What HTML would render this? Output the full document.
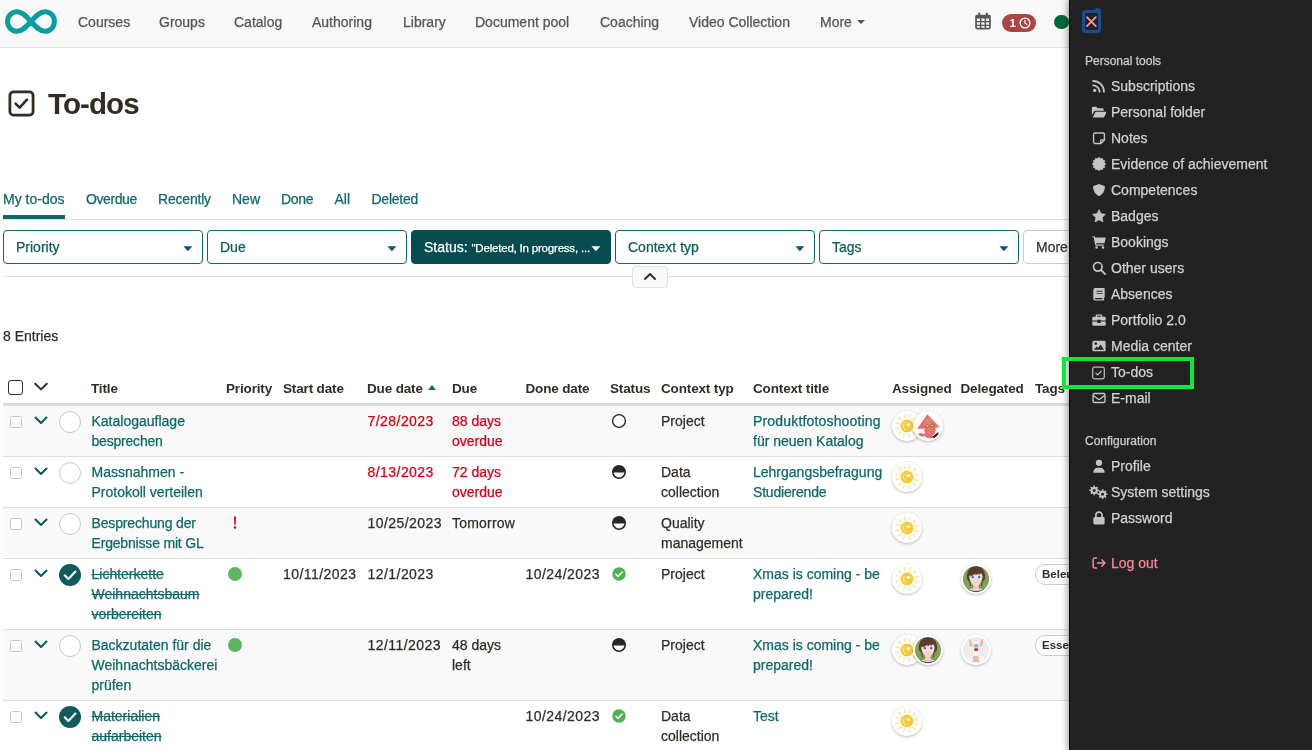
<!DOCTYPE html>
<html><head><meta charset="utf-8"><title>To-dos</title>
<style>
*{box-sizing:border-box}
html,body{margin:0;padding:0}
body{-webkit-text-stroke:0.25px;width:1312px;height:750px;overflow:hidden;position:relative;background:#fff;font-family:"Liberation Sans",sans-serif;font-size:14px;color:#342c24}
.abs{position:absolute}
#nav{position:absolute;left:0;top:0;width:1312px;height:48px;background:#f8f8f8;border-bottom:1px solid #e7e7e7}
#nav .it{position:absolute;top:13px;font-size:14px;line-height:18px;color:#555;white-space:nowrap}
.th,#h1,.tag,.b{-webkit-text-stroke:0}
#main,#nav,#panel{will-change:transform}
.tab{position:absolute;top:190px;font-size:14px;line-height:18px;color:#0e6869;white-space:nowrap}
.flt{position:absolute;top:230px;height:34px;width:200px;border:1px solid #0e6869;border-radius:4px;background:#fff;color:#0e5b5d;font-size:14px;line-height:32px;padding-left:12px;white-space:nowrap;overflow:hidden}
.flt .car{position:absolute;right:9.6px;top:15.2px;width:9px;height:5px;background:#0e5b5d;clip-path:polygon(0 0,100% 0,50% 100%)}
.th{position:absolute;top:380px;font-weight:bold;font-size:13.5px;letter-spacing:-0.15px;line-height:18px;color:#342c24;white-space:nowrap}
.row{position:absolute;left:3px;width:1309px;border-top:1px solid #ddd}
.row.odd{background:#f9f9f9}
.c{position:absolute;font-size:14px;line-height:20px;white-space:nowrap;color:#342c24}
.lk{color:#0e6869}
.red{color:#d6001c}
.st{text-decoration:line-through;text-decoration-thickness:1.2px}
.cb{position:absolute;left:7px;top:10px;width:12px;height:12px;border:1px solid #c4c4c4;border-radius:2.5px;background:#fff}
.chev{position:absolute;left:31px;top:10px;width:14px;height:9px}
.circ{position:absolute;left:56px;top:5px;width:22px;height:22px;border:1px solid #c8c8c8;border-radius:50%;background:#fff}
.circ.done{border:none;background:#0e5b5d}
.av{position:absolute;width:30px;height:30px;border-radius:50%;background:#fff;box-shadow:0 1px 3px rgba(0,0,0,.28);overflow:hidden}
.tag{position:absolute;height:20.5px;border:1px solid #ccc;border-radius:10px;background:#fff;font-size:11.5px;font-weight:bold;line-height:18px;padding:0 6px;color:#342c24;white-space:nowrap}
.dt{letter-spacing:.45px}
#panel{position:absolute;left:1069px;top:0;width:243px;height:750px;background:#222;box-shadow:inset 1px 0 0 #000,-2px 0 6px rgba(0,0,0,.35)}
#panel .h{position:absolute;left:16px;font-size:12px;line-height:16px;color:#cfcfcf;white-space:nowrap}
#panel .mi{position:absolute;left:42px;font-size:14px;line-height:20px;color:#d2d2d2;white-space:nowrap}
#panel svg.ic{position:absolute;left:22.5px;width:14px;height:14px;fill:#c4c4c4}
#hl{position:absolute;left:1062px;top:357px;width:132px;height:32px;border:4px solid #0bea3c}
</style></head>
<body>
<svg width="0" height="0" style="position:absolute"><defs>
<symbol id="sun" viewBox="0 0 30 30"><circle cx="15" cy="15" r="15" fill="#fff"/>
<g stroke="#fbdf86" stroke-width="1.2" stroke-linecap="round" transform="rotate(-13 15 15)"><path d="M15,3.2v3.4M15,23.6v3.2M3.4,15h3.2M23.4,15h3.2M9.1,4.9l1.6,2.9M19.3,22.2l1.6,2.9M20.9,4.9l-1.6,2.9M10.7,22.2l-1.6,2.9M4.9,9.1l2.9,1.6M22.2,19.3l2.9,1.6M4.9,20.9l2.9,-1.6M22.2,10.7l2.9,-1.6"/></g>
<circle cx="15" cy="15" r="6.5" fill="#f9c93a"/><path d="M13.2,11.2a4.3,4.3 0 0 0 1.7,8.1a5.2,5.2 0 0 1 -1.7,-8.1z" fill="#fde9a6"/><ellipse cx="16.3" cy="13.6" rx="1.9" ry="1.4" fill="#fff"/></symbol>
<symbol id="squid" viewBox="0 0 30 30"><circle cx="15" cy="15" r="15" fill="#fff"/>
<path d="M7,23.3c1.5,1.2 3.5,1 5,0.3c1.5,1.8 3.8,2.6 6.5,2.2" fill="none" stroke="#e66e68" stroke-width="2.6" stroke-linecap="round"/>
<path d="M6.3,22.2l0.9,1.8M8.5,21.8l0.3,1.5" stroke="#e66e68" stroke-width=".9" stroke-linecap="round"/>
<ellipse cx="17" cy="19" rx="5.7" ry="6.2" fill="#e66e68"/>
<path d="M14.4,3.7l11.6,12.2l-21.2,1.7z" fill="#e66e68" stroke="#e66e68" stroke-width=".8" stroke-linejoin="round"/>
<ellipse cx="14.8" cy="11.5" rx="3.6" ry="4.4" fill="#ee8683" opacity=".75"/>
<ellipse cx="17" cy="19.5" rx="3" ry="3.4" fill="#ea7a76" opacity=".7"/>
<ellipse cx="14.6" cy="14.9" rx="1.7" ry="1.15" fill="#f4c6bf" stroke="#7a5a2a" stroke-width=".75"/><ellipse cx="19.3" cy="14.5" rx="1.7" ry="1.15" fill="#f4c6bf" stroke="#7a5a2a" stroke-width=".75"/><path d="M16.3,14.7h1.3" stroke="#7a5a2a" stroke-width=".7"/>
<path d="M17.2,17.4l1.2,0.2M17.2,20.3c0.6,0.5 1.3,0.5 1.9,0" stroke="#b8423f" stroke-width=".5" fill="none"/>
<path d="M18.6,26.3l6.9,-5.4l-0.3,2.8l-3.8,3.3z" fill="#3c1420"/></symbol>
<symbol id="girl" viewBox="0 0 30 30"><circle cx="15" cy="15" r="15" fill="#fff"/><clipPath id="gc"><circle cx="15" cy="15" r="13"/></clipPath>
<g clip-path="url(#gc)"><rect width="30" height="30" fill="#7ea252"/>
<path d="M5.9,14C5.5,6 9.5,2.2 15,2.2C20.5,2.2 24.5,6 24.1,14C23.8,16 22.5,17 21.6,17.5L21,22.3L20.1,22.3L20.4,17L9.6,17L9.9,22.3L9,22.3L8.4,17.5C7.5,17 6.2,16 5.9,14z" fill="#5c3b2c"/>
<path d="M12.3,20h5.3v4.6c2.5,0.3 4.6,1 5.6,2v4h-16.4v-4c1,-1 3.1,-1.7 5.5,-2z" fill="#f1cfcc"/>
<path d="M8.2,12C8.2,9 11,7.5 15,7.5C19,7.5 21.6,9 21.6,12C21.6,17 18.5,21.8 15,21.8C11.5,21.8 8.2,17 8.2,12z" fill="#f4d9d6"/>
<path d="M7,13.5C6.5,7 10,4 15,4C20,4 23.5,7 23,13.5C22,12 21,10.5 20.3,9C19.5,10 18.5,10.6 17.3,11C17.5,10.3 17.6,9.8 17.6,9.3C16.5,10.2 15.5,10.8 14.2,11.2C14.5,10.5 14.6,10 14.6,9.5C13,11 11,12 9.2,12.4C9.6,11.8 9.9,11.3 10,10.7C8.8,11.4 7.8,12.3 7,13.5z" fill="#5c3b2c"/>
<ellipse cx="11.8" cy="13.2" rx="1.25" ry="1.1" fill="#3f66b0"/><ellipse cx="18.2" cy="13.2" rx="1.25" ry="1.1" fill="#3f66b0"/>
<path d="M13.8,18.6h2.4" stroke="#d9b0a8" stroke-width=".6"/>
<path d="M6,25.6c2.8,1.5 6,2.1 9,2.1s6.2,-0.6 9,-2.1" fill="none" stroke="#5a2d91" stroke-width="1.2"/></g></symbol>
<symbol id="mouse" viewBox="0 0 30 30"><circle cx="15" cy="15" r="15" fill="#fff"/><circle cx="15" cy="15" r="13" fill="#ececec"/>
<path d="M8.2,3.8c1.8,0.2 3.2,3.4 3.6,7.2c-0.6,0.9 -1.5,1.3 -2.4,1.1c-1.5,-2.4 -2.3,-6.3 -1.2,-8.3z" fill="#f0b8a4" stroke="#fff" stroke-width=".35"/>
<path d="M22,3.5c-1.8,0.2 -3.2,3.4 -3.6,7.2c0.6,0.9 1.5,1.3 2.4,1.1c1.5,-2.4 2.3,-6.3 1.2,-8.3z" fill="#f0b8a4" stroke="#fff" stroke-width=".35"/>
<path d="M12.6,9c0,-2.6 1,-4.2 2.4,-4.2s2.4,1.6 2.4,4.2l0.8,3.8c0.3,0.9 0.8,1.6 0,3.7c-0.3,1.2 -1.4,2 -3.2,2s-2.9,-0.8 -3.2,-2c-0.8,-2.1 -0.3,-2.8 0,-3.7z" fill="#fff"/>
<path d="M12.3,9.2c0.9,-0.7 1.8,-0.9 2.7,-0.5c0.9,-0.4 1.8,-0.2 2.7,0.5l0.3,2.5c-0.6,0.9 -1.6,1.2 -3,1.2s-2.4,-0.3 -3,-1.2z" fill="#a8d8d0"/>
<path d="M14.3,5.8h1.6M14.5,10.2v1.2M15.6,10.2v1.2" stroke="#444" stroke-width=".5"/>
<ellipse cx="15.1" cy="14.5" rx="2.3" ry="1.6" fill="#e3262b"/>
<path d="M13.8,18.3h2.6l0.5,3h-3.6z" fill="#fff"/>
<ellipse cx="14.8" cy="23.3" rx="7.6" ry="1.9" fill="none" stroke="#fff" stroke-width="1.2"/>
<path d="M12.3,21.2c1.6,-0.6 3.6,-0.6 5.2,0l0.4,4.8c-1.9,0.7 -4.1,0.7 -6,0z" fill="#e8bba8"/><path d="M12,26.2h6" stroke="#c89a88" stroke-width=".6"/></symbol>
<symbol id="chv" viewBox="0 0 14 9"><path d="M1.5,1.5l5.5,5.5l5.5,-5.5" fill="none" stroke="#0e5b5d" stroke-width="2.1" stroke-linecap="round" stroke-linejoin="round"/></symbol>
<symbol id="s-open" viewBox="0 0 16 16"><circle cx="8" cy="8" r="6.4" fill="none" stroke="#2b2623" stroke-width="1.35"/></symbol>
<symbol id="s-half" viewBox="0 0 16 16"><circle cx="8" cy="8" r="6.2" fill="#fff" stroke="#2b2623" stroke-width="1.6"/><path d="M1.4,8.4a6.6,6.6 0 0 1 13.2,0z" fill="#2b2623"/></symbol>
<symbol id="s-done" viewBox="0 0 16 16"><circle cx="8" cy="8" r="6.7" fill="#4db04f"/><path d="M4.9,8.2l2.2,2.2l4,-4.3" fill="none" stroke="#fff" stroke-width="1.6" stroke-linecap="round" stroke-linejoin="round"/></symbol>
<symbol id="tick" viewBox="0 0 22 22"><circle cx="11" cy="11" r="11" fill="#0e5b5d"/><path d="M5.7,11.3l3.7,3.7l7,-7.5" fill="none" stroke="#fff" stroke-width="2.1" stroke-linecap="round" stroke-linejoin="round"/></symbol>
</defs></svg>
<!--NAV-->
<div id="nav">
<svg class="abs" style="left:0;top:0" width="64" height="48" viewBox="0 0 64 48"><path d="M31,21.5 C26.5,16.5 22.5,11.7 17,11.7 C11.6,11.7 7.6,16 7.6,21.5 C7.6,27 11.6,31.3 17,31.3 C22.5,31.3 26.5,26.5 31,21.5 C35.5,16.5 39.5,11.7 45,11.7 C50.4,11.7 54.4,16 54.4,21.5 C54.4,27 50.4,31.3 45,31.3 C39.5,31.3 35.5,26.5 31,21.5 Z" fill="none" stroke="#0a9da0" stroke-width="5" stroke-linejoin="round"/></svg>
<span class="it" id="n1" style="left:78px">Courses</span>
<span class="it" id="n2" style="left:159px">Groups</span>
<span class="it" id="n3" style="left:234px">Catalog</span>
<span class="it" id="n4" style="left:312px">Authoring</span>
<span class="it" id="n5" style="left:403px">Library</span>
<span class="it" id="n6" style="left:475px">Document pool</span>
<span class="it" id="n7" style="left:600px">Coaching</span>
<span class="it" id="n8" style="left:689px">Video Collection</span>
<span class="it" id="n9" style="left:820px">More</span>
<div class="abs" style="left:857px;top:20px;width:0;height:0;border-left:4.5px solid transparent;border-right:4.5px solid transparent;border-top:4.5px solid #555"></div>
<svg class="abs" style="left:975px;top:12px" width="16" height="18" viewBox="0 0 16 18"><path fill="#555" fill-rule="evenodd" d="M3.2,0.8h2v2h5.6v-2h2v2h1.2a1.8,1.8 0 0 1 1.8,1.8v11a1.8,1.8 0 0 1 -1.8,1.8h-12a1.8,1.8 0 0 1 -1.8,-1.8v-11a1.8,1.8 0 0 1 1.8,-1.8h1.2z M1.9,6.6v2.4h3v-2.4z M6.4,6.6v2.4h3.2v-2.4z M11.1,6.6v2.4h3v-2.4z M1.9,10.3v2.4h3v-2.4z M6.4,10.3v2.4h3.2v-2.4z M11.1,10.3v2.4h3v-2.4z M1.9,14v1.2a0.5,0.5 0 0 0 0.5,0.5h2.5v-1.7z M6.4,14v1.7h3.2v-1.7z M11.1,14v1.7h2.5a0.5,0.5 0 0 0 0.5,-0.5v-1.2z"/></svg>
<div class="abs" style="left:1002px;top:14px;width:34px;height:18px;border-radius:9px;background:#ab4444"></div>
<span class="abs b" style="left:1009.6px;top:15px;font-size:11.5px;line-height:16px;font-weight:bold;color:#fff">1</span>
<svg class="abs" style="left:1019px;top:17px" width="12" height="12" viewBox="0 0 12 12"><circle cx="6" cy="6" r="4.9" fill="none" stroke="#fff" stroke-width="1.3"/><path d="M6,3.2V6.2L8,7.4" fill="none" stroke="#fff" stroke-width="1.2" stroke-linecap="round"/></svg>
<div class="abs" style="left:1054px;top:14.5px;width:14.5px;height:14.5px;border-radius:50%;background:#00673a"></div>
</div>
<!--MAIN-->
<div id="main">
<svg class="abs" style="left:8px;top:90px" width="27" height="27" viewBox="0 0 27 27"><rect x="1.9" y="1.9" width="23.2" height="23.2" rx="3.6" fill="none" stroke="#342c24" stroke-width="2.8"/><path d="M7.6,13.6l4,4l7.4,-7.9" fill="none" stroke="#342c24" stroke-width="2.7" stroke-linecap="round" stroke-linejoin="round"/></svg>
<span id="h1" class="abs" style="left:48px;top:87px;font-size:29.5px;line-height:34px;font-weight:bold;color:#342c24;letter-spacing:-0.9px;white-space:nowrap">To-dos</span>

<span class="tab" id="t1" style="left:3px">My to-dos</span>
<span class="tab" id="t2" style="left:86px;letter-spacing:-0.4px">Overdue</span>
<span class="tab" id="t3" style="left:158px;letter-spacing:-0.2px">Recently</span>
<span class="tab" id="t4" style="left:232px">New</span>
<span class="tab" id="t5" style="left:281px;letter-spacing:-0.3px">Done</span>
<span class="tab" id="t6" style="left:334.5px">All</span>
<span class="tab" id="t7" style="left:371.5px;letter-spacing:-0.25px">Deleted</span>
<div class="abs" style="left:3px;top:219px;width:1309px;height:1px;background:#dedede"></div>
<div class="abs" style="left:3px;top:215px;width:62px;height:4px;background:#0e6869"></div>

<div class="flt" style="left:3px"><span id="f1">Priority</span><i class="car"></i></div>
<div class="flt" style="left:207px"><span id="f2">Due</span><i class="car"></i></div>
<div class="flt" style="left:411px;background:#054b50;border-color:#054b50;color:#fff"><span id="f3">Status:</span> <span id="f3b" style="font-size:11.5px;letter-spacing:-0.2px">"Deleted, In progress, ...</span><i class="car" style="background:#fff"></i></div>
<div class="flt" style="left:615px"><span id="f4">Context typ</span><i class="car"></i></div>
<div class="flt" style="left:819px"><span id="f5">Tags</span><i class="car"></i></div>
<div class="flt" style="left:1023px;border-color:#ccc;color:#333"><span id="f6">More</span></div>

<div class="abs" style="left:3px;top:276px;width:1309px;height:1px;background:#e2e2e2"></div>
<div class="abs" style="left:632px;top:266px;width:36px;height:22px;border:1px solid #e2e2e2;border-radius:4px;background:#f9f9f9"></div>
<svg class="abs" style="left:643px;top:272px" width="14" height="9" viewBox="0 0 14 9"><path d="M2,7l5,-5l5,5" fill="none" stroke="#342c24" stroke-width="1.9" stroke-linecap="round" stroke-linejoin="round"/></svg>

<span id="ent" class="abs" style="left:3px;top:327px;font-size:14px;line-height:18px;color:#342c24">8 Entries</span>

<div class="abs" style="left:8px;top:380px;width:15px;height:15px;border:1.6px solid #342c24;border-radius:3px;background:#fff"></div>
<svg class="abs" style="left:32.5px;top:382px" width="16" height="10" viewBox="0 0 16 10"><path d="M2.2,1.8l5.8,5.6l5.8,-5.6" fill="none" stroke="#342c24" stroke-width="2" stroke-linecap="round" stroke-linejoin="round"/></svg>
<span class="th" id="th1" style="left:91px">Title</span>
<span class="th" id="th2" style="left:226px">Priority</span>
<span class="th" id="th3" style="left:283px">Start date</span>
<span class="th" id="th4" style="left:367px">Due date</span>
<div class="abs" style="left:428px;top:385px;width:0;height:0;border-left:4.5px solid transparent;border-right:4.5px solid transparent;border-bottom:5px solid #0e6869"></div>
<span class="th" id="th5" style="left:452px">Due</span>
<span class="th" id="th6" style="left:525.5px">Done date</span>
<span class="th" id="th7" style="left:610px">Status</span>
<span class="th" id="th8" style="left:661px">Context typ</span>
<span class="th" id="th9" style="left:753px">Context title</span>
<span class="th" id="th10" style="left:892px">Assigned</span>
<span class="th" id="th11" style="left:960.5px">Delegated</span>
<span class="th" id="th12" style="left:1035px">Tags</span>
<div class="abs" style="left:3px;top:403px;width:1309px;height:3px;background:#dcdcdc"></div>
<div class="row odd" style="top:405px;height:51px;border-top-color:#dcdcdc">
<i class="cb"></i><svg class="chev"><use href="#chv"/></svg><i class="circ"></i>
<span class="c lk" id="r1a" style="left:88.5px;top:5px">Katalogauflage<br><span style="letter-spacing:-0.2px">besprechen</span></span>
<span class="c red dt" id="r1b" style="left:364.5px;top:5px">7/28/2023</span>
<span class="c red" id="r1c" style="left:449px;top:5px">88 days<br>overdue</span>
<svg class="abs" style="left:608px;top:7px" width="16" height="16"><use href="#s-open"/></svg>
<span class="c" id="r1d" style="left:658px;top:5px">Project</span>
<span class="c lk" id="r1e" style="left:750px;top:5px"><span style="letter-spacing:0.17px">Produktfotoshooting</span><br>für neuen Katalog</span>
<svg class="av" style="left:889px;top:5px"><use href="#sun"/></svg>
<svg class="av" style="left:910px;top:5px"><use href="#squid"/></svg>
</div>

<div class="row" style="top:456px;height:51px">
<i class="cb"></i><svg class="chev"><use href="#chv"/></svg><i class="circ"></i>
<span class="c lk" id="r2a" style="left:88.5px;top:5px">Massnahmen -<br>Protokoll verteilen</span>
<span class="c red dt" id="r2b" style="left:364.5px;top:5px">8/13/2023</span>
<span class="c red" id="r2c" style="left:449px;top:5px">72 days<br>overdue</span>
<svg class="abs" style="left:608px;top:7px" width="16" height="16"><use href="#s-half"/></svg>
<span class="c" id="r2d" style="left:658px;top:5px">Data<br>collection</span>
<span class="c lk" id="r2e" style="left:750px;top:5px">Lehrgangsbefragung<br><span style="letter-spacing:-0.2px">Studierende</span></span>
<svg class="av" style="left:889px;top:5px"><use href="#sun"/></svg>
</div>

<div class="row odd" style="top:507px;height:51px">
<i class="cb"></i><svg class="chev"><use href="#chv"/></svg><i class="circ"></i>
<span class="c lk" id="r3a" style="left:88.5px;top:5px"><span style="letter-spacing:-0.15px">Besprechung der</span><br><span style="letter-spacing:-0.18px">Ergebnisse mit GL</span></span>
<svg class="abs" style="left:230.4px;top:8.2px" width="4" height="13" viewBox="0 0 4 13"><path d="M1,0.4h2l-0.3,8.3h-1.4z" fill="#d6001c"/><circle cx="2" cy="11.4" r="1.25" fill="#d6001c"/></svg>
<span class="c dt" id="r3b" style="left:364.5px;top:5px">10/25/2023</span>
<span class="c" id="r3c" style="left:449px;top:5px"><span style="letter-spacing:0.2px">Tomorrow</span></span>
<svg class="abs" style="left:608px;top:7px" width="16" height="16"><use href="#s-half"/></svg>
<span class="c" id="r3d" style="left:658px;top:5px">Quality<br>management</span>
<svg class="av" style="left:889px;top:5px"><use href="#sun"/></svg>
</div>

<div class="row" style="top:558px;height:71px">
<i class="cb"></i><svg class="chev"><use href="#chv"/></svg><svg class="abs" style="left:56px;top:5px" width="22" height="22"><use href="#tick"/></svg>
<span class="c lk st" id="r4a" style="left:88.5px;top:5px">Lichterkette<br>Weihnachtsbaum<br>vorbereiten</span>
<i class="abs" style="left:225.3px;top:7.8px;width:14px;height:14px;border-radius:50%;background:#5cb560"></i>
<span class="c dt" id="r4s" style="left:280px;top:5px">10/11/2023</span>
<span class="c dt" id="r4b" style="left:364.5px;top:5px">12/1/2023</span>
<span class="c dt" id="r4f" style="left:522.5px;top:5px">10/24/2023</span>
<svg class="abs" style="left:608px;top:7px" width="16" height="16"><use href="#s-done"/></svg>
<span class="c" id="r4d" style="left:658px;top:5px">Project</span>
<span class="c lk" id="r4e" style="left:750px;top:5px">Xmas is coming - be<br>prepared!</span>
<svg class="av" style="left:889px;top:5px"><use href="#sun"/></svg>
<svg class="av" style="left:958px;top:5px"><use href="#girl"/></svg>
<span class="tag" style="left:1032px;top:5px">Beleuchtung</span>
</div>

<div class="row odd" style="top:629px;height:71px">
<i class="cb"></i><svg class="chev"><use href="#chv"/></svg><i class="circ"></i>
<span class="c lk" id="r5a" style="left:88.5px;top:5px">Backzutaten für die<br>Weihnachtsbäckerei<br>prüfen</span>
<i class="abs" style="left:225.3px;top:7.8px;width:14px;height:14px;border-radius:50%;background:#5cb560"></i>
<span class="c dt" id="r5b" style="left:364.5px;top:5px">12/11/2023</span>
<span class="c" id="r5c" style="left:449px;top:5px">48 days<br>left</span>
<svg class="abs" style="left:608px;top:7px" width="16" height="16"><use href="#s-half"/></svg>
<span class="c" id="r5d" style="left:658px;top:5px">Project</span>
<span class="c lk" id="r5e" style="left:750px;top:5px">Xmas is coming - be<br>prepared!</span>
<svg class="av" style="left:889px;top:5px"><use href="#sun"/></svg>
<svg class="av" style="left:910px;top:5px"><use href="#girl"/></svg>
<svg class="av" style="left:958px;top:5px"><use href="#mouse"/></svg>
<span class="tag" style="left:1032px;top:5px">Essen</span>
</div>

<div class="row" style="top:700px;height:51px">
<i class="cb"></i><svg class="chev"><use href="#chv"/></svg><svg class="abs" style="left:56px;top:5px" width="22" height="22"><use href="#tick"/></svg>
<span class="c lk st" id="r6a" style="left:88.5px;top:5px">Materialien<br>aufarbeiten</span>
<span class="c dt" id="r6f" style="left:522.5px;top:5px">10/24/2023</span>
<svg class="abs" style="left:608px;top:7px" width="16" height="16"><use href="#s-done"/></svg>
<span class="c" id="r6d" style="left:658px;top:5px">Data<br>collection</span>
<span class="c lk" id="r6e" style="left:750px;top:5px">Test</span>
<svg class="av" style="left:889px;top:5px"><use href="#sun"/></svg>
</div>
</div>
<!--PANEL-->
<div id="panel">
<div class="abs" style="left:24.8px;top:7.6px;width:7.4px;height:7.4px;background:#134f93;border-radius:50%"></div>
<div class="abs" style="left:13px;top:10px;width:19px;height:23px;border:3px solid #134f93;border-radius:4px;background:#222"></div>
<div class="abs" style="left:27.7px;top:10.5px;width:1.7px;height:1.7px;background:#222;border-radius:50%"></div>
<svg class="abs" style="left:16px;top:15px" width="13" height="13" viewBox="0 0 13 13"><path d="M1.9,2.1L10.8,11.1M10.8,2.1L1.9,11.1" stroke="#f894a8" stroke-width="1.8" stroke-linecap="round" fill="none"/></svg>
<span class="h" id="ph1" style="top:53px">Personal tools</span>
<span class="h" id="ph2" style="top:433px">Configuration</span>

<svg class="ic" style="top:79px" viewBox="0 0 16 16"><circle cx="3.1" cy="13" r="1.9"/><path d="M1.3,7.3a7.4,7.4 0 0 1 7.4,7.4M1.3,2.3a12.4,12.4 0 0 1 12.4,12.4" fill="none" stroke="#c4c4c4" stroke-width="2.1" stroke-linecap="round"/></svg>
<span class="mi" id="p1" style="top:76px">Subscriptions</span>

<svg class="ic" style="top:105px;left:21.5px;width:15.75px" viewBox="0 0 18 16"><path d="M1,3.6a1.6,1.6 0 0 1 1.6,-1.6h3.3l1.8,1.8h5.2a1.6,1.6 0 0 1 1.6,1.6v1.1h-9.6a1.8,1.8 0 0 0 -1.6,1l-2.3,4.6z"/><path d="M4.7,8.6a1.3,1.3 0 0 1 1.2,-0.8h10.7a0.9,0.9 0 0 1 0.8,1.3l-2.2,4.4a1.3,1.3 0 0 1 -1.2,0.7h-12z"/></svg>
<span class="mi" id="p2" style="top:102px">Personal folder</span>

<svg class="ic" style="top:131px" viewBox="0 0 16 16"><path d="M3.4,2.2h9.2a1.6,1.6 0 0 1 1.6,1.6v6.4l-4,4h-6.8a1.6,1.6 0 0 1 -1.6,-1.6v-8.8a1.6,1.6 0 0 1 1.6,-1.6z M10,14v-3a0.9,0.9 0 0 1 0.9,-0.9h3" fill="none" stroke="#c4c4c4" stroke-width="1.6" stroke-linejoin="round"/></svg>
<span class="mi" id="p3" style="top:128px">Notes</span>

<svg class="ic" style="top:157px" viewBox="0 0 16 16"><path d="M8.0,0.1L9.6,1.9L11.9,1.2L12.5,3.5L14.8,4.0L14.1,6.4L15.9,8.0L14.1,9.6L14.8,11.9L12.5,12.5L11.9,14.8L9.6,14.1L8.0,15.9L6.4,14.1L4.1,14.8L3.5,12.5L1.2,12.0L1.9,9.6L0.1,8.0L1.9,6.4L1.2,4.0L3.5,3.5L4.0,1.2L6.4,1.9z" stroke="#c4c4c4" stroke-width="0.5" stroke-linejoin="round"/></svg>
<span class="mi" id="p4" style="top:154px">Evidence of achievement</span>

<svg class="ic" style="top:183px" viewBox="0 0 16 16"><path d="M8,1.1l6.1,2.3c0.4,0.2 0.6,0.5 0.6,0.9c0,5.2 -3.1,9.2 -6.7,10.7c-3.6,-1.5 -6.7,-5.5 -6.7,-10.7c0,-0.4 0.2,-0.7 0.6,-0.9z"/></svg>
<span class="mi" id="p5" style="top:180px">Competences</span>

<svg class="ic" style="top:209px" viewBox="0 0 16 16"><path d="M8,0.7l2.2,4.7l5.1,0.7l-3.7,3.6l0.9,5.1l-4.5,-2.5l-4.5,2.5l0.9,-5.1l-3.7,-3.6l5.1,-0.7z" stroke="#c4c4c4" stroke-width="0.8" stroke-linejoin="round"/></svg>
<span class="mi" id="p6" style="top:206px">Badges</span>

<svg class="ic" style="top:235px" viewBox="0 0 16 16"><path d="M0.4,1.3h2.3a0.7,0.7 0 0 1 0.7,0.6l0.2,1h11.4a0.7,0.7 0 0 1 0.7,0.9l-1.3,5a0.9,0.9 0 0 1 -0.9,0.7h-8.8l0.3,1.4h8.5v1.4h-9.1a0.7,0.7 0 0 1 -0.7,-0.6l-1.8,-9h-1.5z"/><circle cx="5.2" cy="14.2" r="1.4"/><circle cx="12.6" cy="14.2" r="1.4"/></svg>
<span class="mi" id="p7" style="top:232px">Bookings</span>

<svg class="ic" style="top:261px" viewBox="0 0 16 16"><circle cx="6.6" cy="6.6" r="4.9" fill="none" stroke="#c4c4c4" stroke-width="1.9"/><path d="M10.3,10.3l4.7,4.7" stroke="#c4c4c4" stroke-width="2.1" stroke-linecap="round"/></svg>
<span class="mi" id="p8" style="top:258px">Other users</span>

<svg class="ic" style="top:287px" viewBox="0 0 16 16"><path fill-rule="evenodd" d="M4,1h9.5a1,1 0 0 1 1,1v9.5a1,1 0 0 1 -1,1v1.5h0.5v1.3h-10.2a2.3,2.3 0 0 1 -2.3,-2.3v-9.7a2.5,2.5 0 0 1 2.5,-2.3z M4,12.5a0.75,0.75 0 0 0 0,1.5h8v-1.5z M5.2,4.3v1.1h6.8v-1.1z M5.2,7v1.1h6.8v-1.1z"/></svg>
<span class="mi" id="p9" style="top:284px">Absences</span>

<svg class="ic" style="top:313px" viewBox="0 0 16 16"><path fill-rule="evenodd" d="M5.6,1.6h4.8a1.4,1.4 0 0 1 1.4,1.4v1.3h2.4a1.5,1.5 0 0 1 1.5,1.5v2.8h-5.7v-0.8h-4v0.8h-5.7v-2.8a1.5,1.5 0 0 1 1.5,-1.5h2.4v-1.3a1.4,1.4 0 0 1 1.4,-1.4z M5.8,3.1v1.2h4.4v-1.2z"/><path d="M0.3,9.8h5.7v1a0.6,0.6 0 0 0 0.6,0.6h2.8a0.6,0.6 0 0 0 0.6,-0.6v-1h5.7v3.3a1.5,1.5 0 0 1 -1.5,1.5h-12.4a1.5,1.5 0 0 1 -1.5,-1.5z"/></svg>
<span class="mi" id="p10" style="top:310px">Portfolio 2.0</span>

<svg class="ic" style="top:339px" viewBox="0 0 16 16"><path fill-rule="evenodd" d="M2.2,2h11.6a1.8,1.8 0 0 1 1.8,1.8v8.4a1.8,1.8 0 0 1 -1.8,1.8h-11.6a1.8,1.8 0 0 1 -1.8,-1.8v-8.4a1.8,1.8 0 0 1 1.8,-1.8z M4.3,3.8a1.5,1.5 0 1 0 0.01,0z M2.2,12.3h11.6l-4,-6.1l-2.9,4.1l-1.5,-1.8z"/></svg>
<span class="mi" id="p11" style="top:336px">Media center</span>

<svg class="ic" style="top:365.5px;left:23px;width:13px;height:14px" viewBox="0 0 13 14"><rect x="0.7" y="1.2" width="11.6" height="11.6" rx="1.8" fill="none" stroke="#bdbdbd" stroke-width="1.25"/><path d="M3.9,7.1l1.8,1.8l3.4,-3.6" fill="none" stroke="#bdbdbd" stroke-width="1.25" stroke-linecap="round" stroke-linejoin="round"/></svg>
<span class="mi" id="p12" style="top:362px">To-dos</span>

<svg class="ic" style="top:391px" viewBox="0 0 16 16"><rect x="1.2" y="2.8" width="13.6" height="10.4" rx="1.7" fill="none" stroke="#c4c4c4" stroke-width="1.6"/><path d="M1.6,5.2l5.3,4a1.8,1.8 0 0 0 2.2,0l5.3,-4" fill="none" stroke="#c4c4c4" stroke-width="1.6"/></svg>
<span class="mi" id="p13" style="top:388px">E-mail</span>

<svg class="ic" style="top:459px" viewBox="0 0 16 16"><circle cx="8" cy="4.4" r="3.6"/><path d="M1.5,15.2a4.9,4.9 0 0 1 4.9,-5.1h3.2a4.9,4.9 0 0 1 4.9,5.1a0.6,0.6 0 0 1 -0.6,0.5h-11.8a0.6,0.6 0 0 1 -0.6,-0.5z"/></svg>
<span class="mi" id="p14" style="top:456px">Profile</span>

<svg class="ic" style="top:484px;left:19px;width:20px;height:16px" viewBox="0 0 20 16"><path fill-rule="evenodd" d="M11.06,5.75L11.06,7.05L9.70,7.24L9.27,8.28L10.10,9.37L9.17,10.30L8.08,9.47L7.04,9.90L6.85,11.26L5.55,11.26L5.36,9.90L4.32,9.47L3.23,10.30L2.30,9.37L3.13,8.28L2.70,7.24L1.34,7.05L1.34,5.75L2.70,5.56L3.13,4.52L2.30,3.43L3.23,2.50L4.32,3.33L5.36,2.90L5.55,1.54L6.85,1.54L7.04,2.90L8.08,3.33L9.17,2.50L10.10,3.43L9.27,4.52L9.70,5.56zM6.20,4.90 a1.50,1.50 0 1 0 0.01,0z"/><path fill-rule="evenodd" d="M19.46,9.55L19.46,10.85L18.10,11.04L17.67,12.08L18.50,13.17L17.57,14.10L16.48,13.27L15.44,13.70L15.25,15.06L13.95,15.06L13.76,13.70L12.72,13.27L11.63,14.10L10.70,13.17L11.53,12.08L11.10,11.04L9.74,10.85L9.74,9.55L11.10,9.36L11.53,8.32L10.70,7.23L11.63,6.30L12.72,7.13L13.76,6.70L13.95,5.34L15.25,5.34L15.44,6.70L16.48,7.13L17.57,6.30L18.50,7.23L17.67,8.32L18.10,9.36zM14.60,8.70 a1.50,1.50 0 1 0 0.01,0z"/></svg>
<span class="mi" id="p15" style="top:482px">System settings</span>

<svg class="ic" style="top:511px" viewBox="0 0 16 16"><path d="M4.5,7v-2.2a3.5,3.5 0 0 1 7,0v2.2" fill="none" stroke="#c4c4c4" stroke-width="1.9"/><rect x="1.6" y="6.8" width="12.8" height="8.6" rx="1.7"/></svg>
<span class="mi" id="p16" style="top:508px">Password</span>

<svg class="ic" style="top:556px" viewBox="0 0 16 16"><path d="M5.2,2.3h-2a1.9,1.9 0 0 0 -1.9,1.9v7.6a1.9,1.9 0 0 0 1.9,1.9h2 M6.2,8h8.3 M11.2,4.4l3.5,3.6l-3.5,3.6" fill="none" stroke="#f7899b" stroke-width="1.7" stroke-linecap="round" stroke-linejoin="round"/></svg>
<span class="mi" id="p17" style="top:553px;color:#f7899b">Log out</span>
</div>
<div id="hl"></div>
</body></html>
